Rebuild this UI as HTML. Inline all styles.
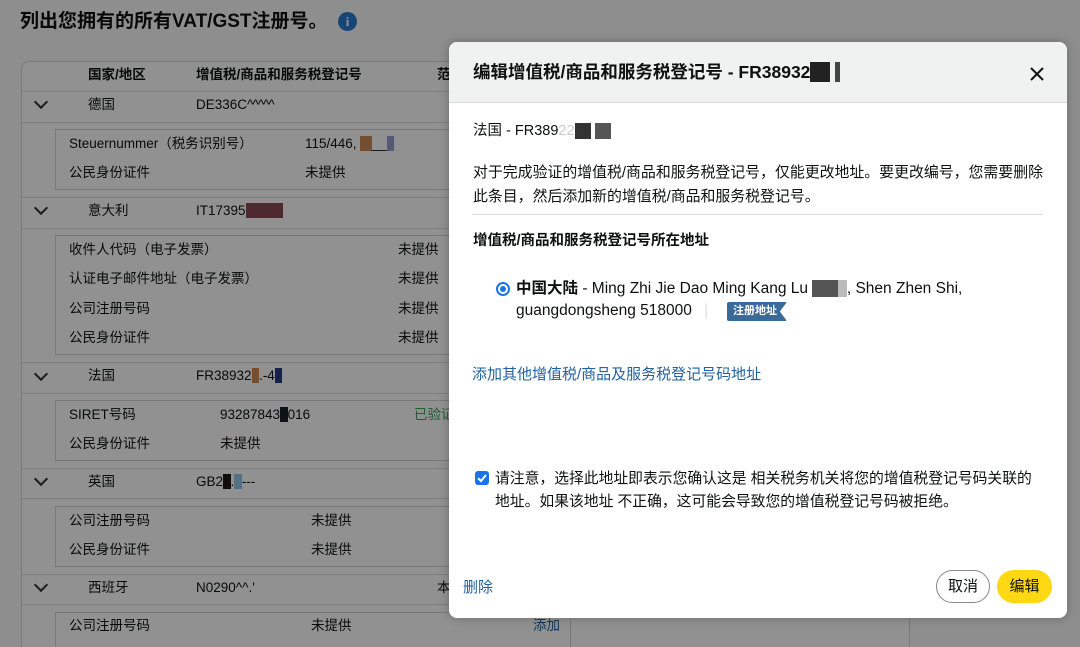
<!DOCTYPE html>
<html><head><meta charset="utf-8"><style>
*{margin:0;padding:0;box-sizing:border-box}
html,body{width:1080px;height:647px;overflow:hidden;background:#fafafa}
body{font-family:"Liberation Sans","Noto Sans CJK SC",sans-serif;color:#111;position:relative}
.a{position:absolute;white-space:nowrap;line-height:1.2}
.t{font-size:13.5px;color:#0f1111}
.ln{position:absolute;background:#ddd}
.box{position:absolute;border:1px solid #d5d5d5;background:#fff}
.chev{position:absolute;width:10px;height:10px;border-right:2px solid #333;border-bottom:2px solid #333;transform:rotate(45deg)}
#ov{position:absolute;left:0;top:0;width:1080px;height:647px;background:rgba(0,0,0,0.43)}
.m{position:absolute;left:449px;top:42px;width:618px;height:576px;background:#fff;border-radius:8px;overflow:hidden;box-shadow:0 0 10px rgba(0,0,0,.25)}
.m .a{color:#0f1111}
</style></head><body>
<div class="a" style="left:20px;top:11px;font-size:19px;font-weight:bold">列出您拥有的所有VAT/GST注册号。</div>
<div class="a" style="left:338px;top:12px;width:19px;height:19px;border-radius:50%;background:#2a7ad2;color:#fff;font-size:13px;font-weight:bold;text-align:center;line-height:19px;font-family:'Liberation Serif',serif">i</div>

<div class="box" style="left:21px;top:61px;width:889px;height:600px;border-radius:8px"></div>
<div class="a t" style="left:88px;top:67px;font-weight:bold">国家/地区</div>
<div class="a t" style="left:196px;top:67px;font-weight:bold">增值税/商品和服务税登记号</div>
<div class="a t" style="left:437px;top:67px;font-weight:bold">范</div>
<div class="ln" style="left:21px;top:91px;width:889px;height:1px"></div>

<div class="chev" style="left:36px;top:97px"></div>
<div class="a t" style="left:88px;top:97px">德国</div>
<div class="a t" style="left:196px;top:97px">DE336C<span style="letter-spacing:-1px">^^^^^</span></div>
<div class="ln" style="left:21px;top:122px;width:889px;height:1px"></div>
<div class="box" style="left:55px;top:129px;width:520px;height:61px"></div>
<div class="a t" style="left:69px;top:136px">Steuernummer（税务识别号）</div>
<div class="a t" style="left:305px;top:136px">115/446, <span style="background:#c98a5a">&nbsp;&nbsp;&nbsp;</span>__<span style="background:#9a9ad0">&nbsp;&nbsp;</span></div>
<div class="a t" style="left:69px;top:165px">公民身份证件</div>
<div class="a t" style="left:305px;top:165px">未提供</div>
<div class="ln" style="left:21px;top:197px;width:889px;height:1px"></div>

<div class="chev" style="left:36px;top:203px"></div>
<div class="a t" style="left:88px;top:203px">意大利</div>
<div class="a t" style="left:196px;top:203px">IT17395<span style="background:#8a4a55;color:#8a4a55">00000</span></div>
<div class="ln" style="left:21px;top:228px;width:889px;height:1px"></div>
<div class="box" style="left:55px;top:235px;width:520px;height:120px"></div>
<div class="a t" style="left:69px;top:242px">收件人代码（电子发票）</div>
<div class="a t" style="left:398px;top:242px">未提供</div>
<div class="a t" style="left:69px;top:271px">认证电子邮件地址（电子发票）</div>
<div class="a t" style="left:398px;top:271px">未提供</div>
<div class="a t" style="left:69px;top:301px">公司注册号码</div>
<div class="a t" style="left:398px;top:301px">未提供</div>
<div class="a t" style="left:69px;top:330px">公民身份证件</div>
<div class="a t" style="left:398px;top:330px">未提供</div>
<div class="ln" style="left:21px;top:362px;width:889px;height:1px"></div>

<div class="chev" style="left:36px;top:369px"></div>
<div class="a t" style="left:88px;top:368px">法国</div>
<div class="a t" style="left:196px;top:368px">FR38932<span style="background:#d08a50">&nbsp;&nbsp;</span>.-4<span style="background:#2a3a80">&nbsp;&nbsp;</span></div>
<div class="ln" style="left:21px;top:393px;width:889px;height:1px"></div>
<div class="box" style="left:55px;top:400px;width:520px;height:61px"></div>
<div class="a t" style="left:69px;top:407px">SIRET号码</div>
<div class="a t" style="left:220px;top:407px">93287843<span style="background:#1a1f2a">&nbsp;&nbsp;</span>016</div>
<div class="a t" style="left:414px;top:407px;color:#3aa35a">已验证</div>
<div class="a t" style="left:69px;top:436px">公民身份证件</div>
<div class="a t" style="left:220px;top:436px">未提供</div>
<div class="ln" style="left:21px;top:468px;width:889px;height:1px"></div>

<div class="chev" style="left:36px;top:474px"></div>
<div class="a t" style="left:88px;top:474px">英国</div>
<div class="a t" style="left:196px;top:474px">GB2<span style="background:#201818">&nbsp;&nbsp;</span>.<span style="background:#90c8e8">&nbsp;&nbsp;</span>---</div>
<div class="ln" style="left:21px;top:498px;width:889px;height:1px"></div>
<div class="box" style="left:55px;top:506px;width:520px;height:61px"></div>
<div class="a t" style="left:69px;top:513px">公司注册号码</div>
<div class="a t" style="left:311px;top:513px">未提供</div>
<div class="a t" style="left:69px;top:542px">公民身份证件</div>
<div class="a t" style="left:311px;top:542px">未提供</div>
<div class="ln" style="left:21px;top:574px;width:889px;height:1px"></div>

<div class="chev" style="left:36px;top:580px"></div>
<div class="a t" style="left:88px;top:580px">西班牙</div>
<div class="a t" style="left:196px;top:580px">N0290^^.'</div>
<div class="a t" style="left:437px;top:580px">本</div>
<div class="ln" style="left:21px;top:604px;width:889px;height:1px"></div>
<div class="box" style="left:55px;top:612px;width:516px;height:60px"></div>
<div class="a t" style="left:69px;top:618px">公司注册号码</div>
<div class="a t" style="left:311px;top:618px">未提供</div>
<div class="a t" style="left:533px;top:618px;color:#2162a1">添加</div>

<div id="ov"></div>

<div class="m">
  <div style="position:absolute;left:0;top:0;width:618px;height:61px;background:#f0f2f2;border-bottom:1px solid #dcdcdc"></div>
  <div class="a" style="left:24px;top:20px;font-size:17.5px;font-weight:bold">编辑增值税/商品和服务税登记号 - FR38932<span style="background:#222;color:#222">00</span> <span style="background:#444">&nbsp;</span></div>
  <svg style="position:absolute;left:581px;top:25px" width="14" height="14" viewBox="0 0 14 14"><path d="M1 1L13 13M13 1L1 13" stroke="#111" stroke-width="2"/></svg>
  <div class="a" style="left:24px;top:81px;font-size:14.5px">法国 - FR389<span style="color:#ccc">22</span><span style="background:#333;color:#333">70</span> <span style="background:#555;color:#555">92</span></div>
  <div class="a" style="left:24px;top:119px;font-size:14.9px;line-height:24px">对于完成验证的增值税/商品和服务税登记号，仅能更改地址。要更改编号，您需要删除<br>此条目，然后添加新的增值税/商品和服务税登记号。</div>
  <div style="position:absolute;left:23px;top:172px;width:571px;height:1px;background:#ddd"></div>
  <div class="a" style="left:24px;top:191px;font-size:14.5px;font-weight:bold">增值税/商品和服务税登记号所在地址</div>
  <div style="position:absolute;left:47px;top:240px;width:14px;height:14px;border-radius:50%;border:2px solid #1a73e8;background:#fff"><div style="margin:2px;width:6px;height:6px;border-radius:50%;background:#1a73e8"></div></div>
  <div class="a" style="left:67px;top:236px;font-size:15.5px;line-height:22px"><b>中国大陆</b> - Ming Zhi Jie Dao Ming Kang Lu <span style="background:#555;color:#555">000</span><span style="background:#bbb;color:#bbb">0</span>, Shen Zhen Shi,<br>guangdongsheng 518000 <span style="color:#ddd;margin:0 8px">|</span></div>
  <div class="a" style="left:278px;top:260px;height:19px;padding:0 10px 0 6px;background:#3a6a9a;color:#fff;font-size:11px;font-weight:bold;line-height:19px;border-radius:2px;clip-path:polygon(0 0,100% 0,88% 50%,100% 100%,0 100%)">注册地址</div>
  <div class="a" style="left:23px;top:324px;font-size:15px;color:#2162a1">添加其他增值税/商品及服务税登记号码地址</div>
  <div style="position:absolute;left:26px;top:429px;width:14px;height:14px;border-radius:3px;background:#1a73e8"><svg width="14" height="14" viewBox="0 0 14 14"><path d="M3 7.2L6 10L11 4" stroke="#fff" stroke-width="2" fill="none"/></svg></div>
  <div class="a" style="left:46px;top:426px;font-size:14.8px;line-height:23px">请注意，选择此地址即表示您确认这是 相关税务机关将您的增值税登记号码关联的<br>地址。如果该地址 不正确，这可能会导致您的增值税登记号码被拒绝。</div>
  <div class="a" style="left:14px;top:537px;font-size:15px;color:#2162a1">删除</div>
  <div class="a" style="left:487px;top:528px;width:54px;height:33px;border:1px solid #888;border-radius:17px;font-size:15px;text-align:center;line-height:31px">取消</div>
  <div class="a" style="left:548px;top:528px;width:55px;height:33px;background:#ffd814;border-radius:17px;font-size:15px;text-align:center;line-height:33px">编辑</div>
</div>
</body></html>
